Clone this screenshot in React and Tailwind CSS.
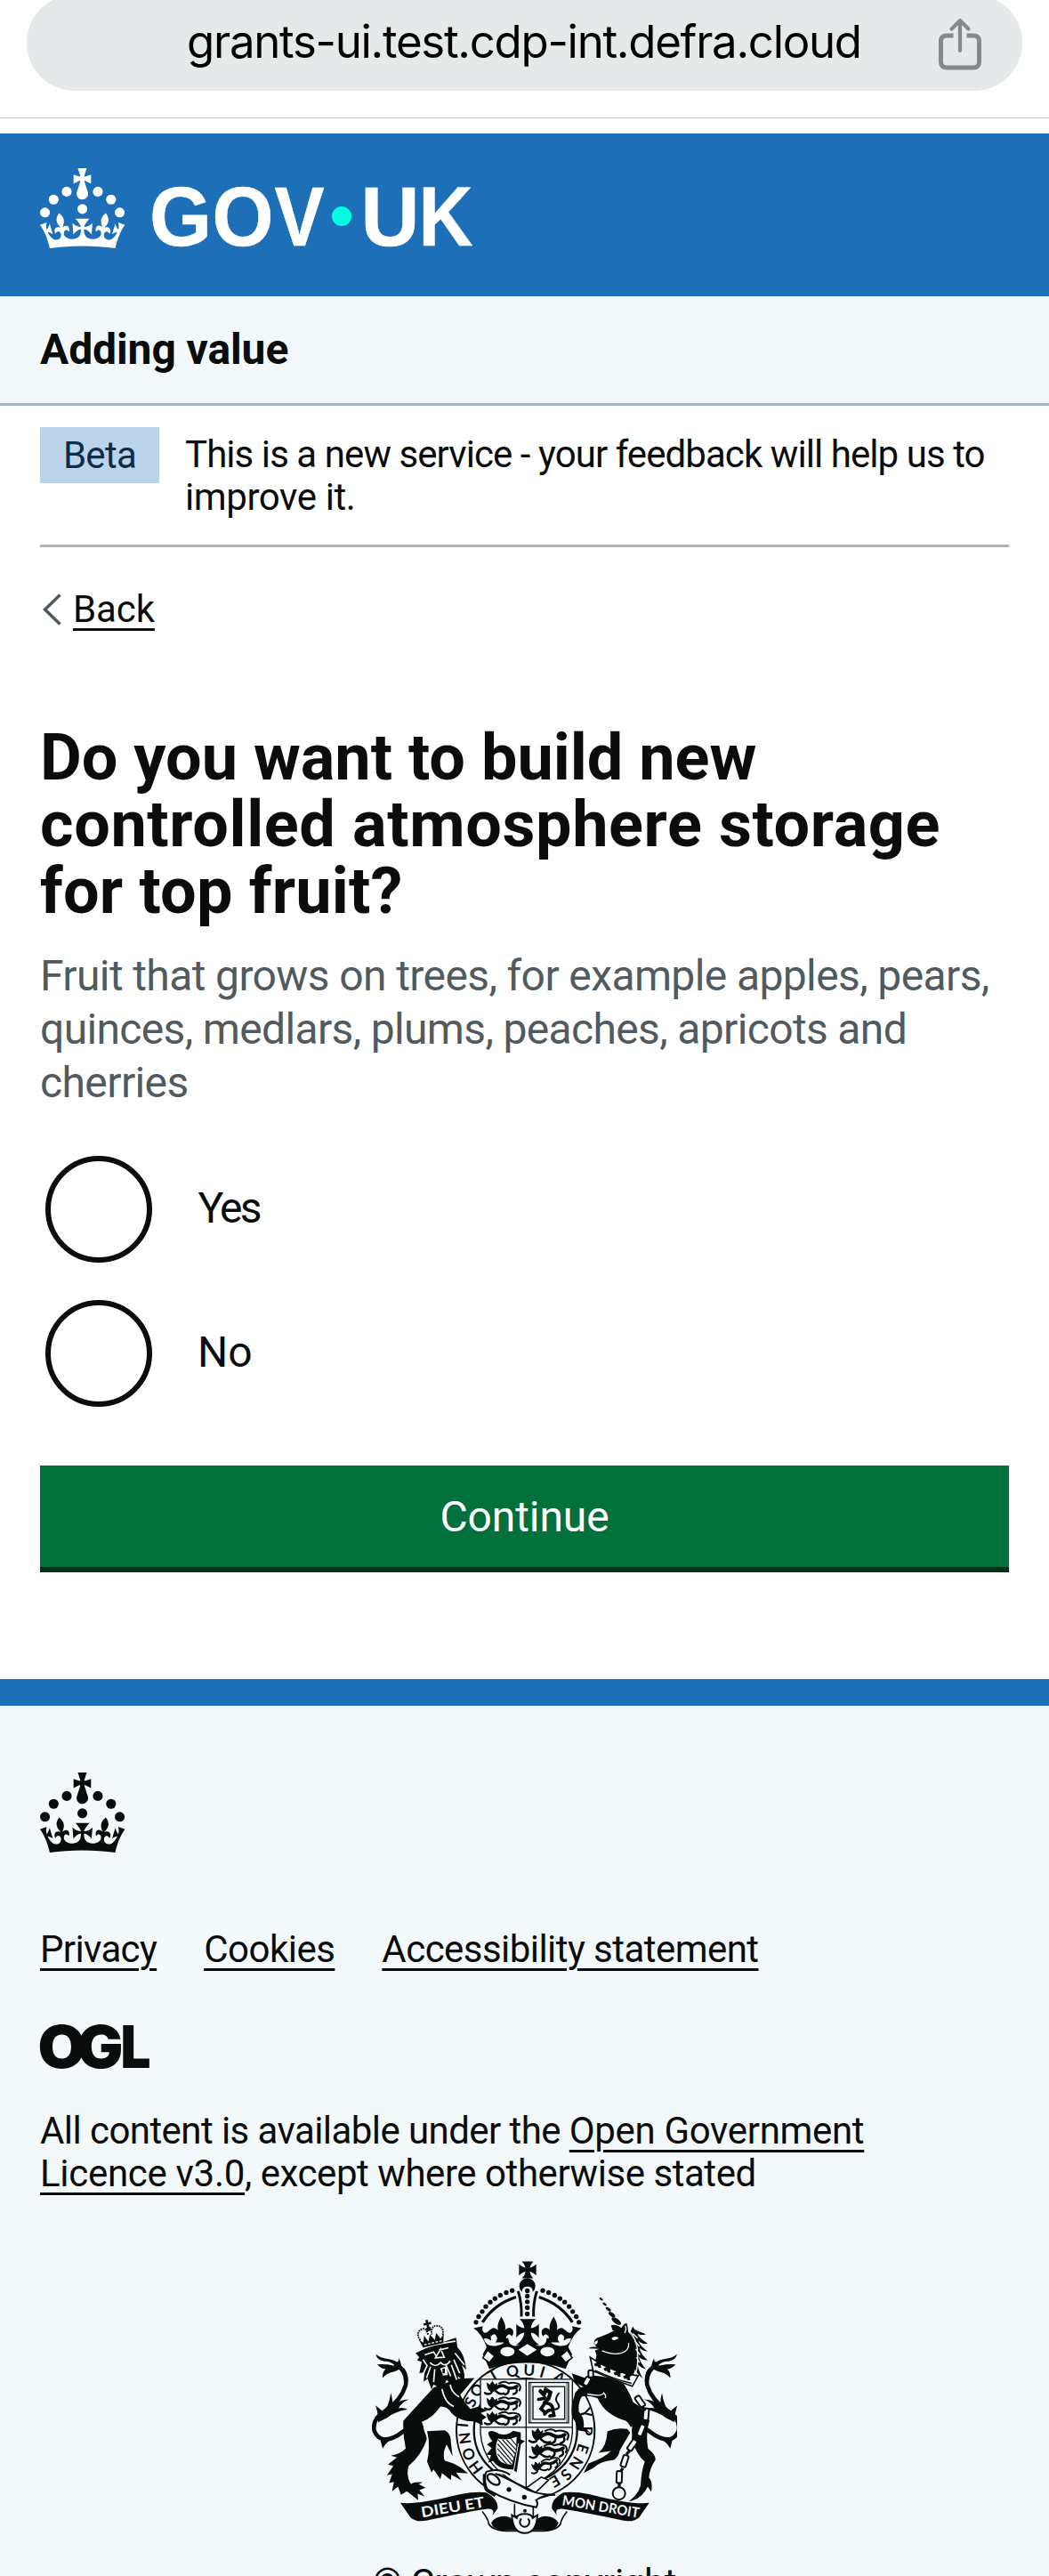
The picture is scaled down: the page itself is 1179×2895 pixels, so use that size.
import React from "react";

const INK = "#0b0c0c";
const PAPER = "#f3f9fb";

function Crown() {
  return (
    <g>
      <circle cx="20" cy="17.6" r="3.7" />
      <circle cx="10.2" cy="23.5" r="3.7" />
      <circle cx="3.7" cy="33.2" r="3.7" />
      <circle cx="31.7" cy="30.6" r="3.7" />
      <circle cx="43.3" cy="17.6" r="3.7" />
      <circle cx="53.2" cy="23.5" r="3.7" />
      <circle cx="59.7" cy="33.2" r="3.7" />
      <path d="M33.1,9.8c.2-.1.3-.3.5-.5l4.6,2.4v-6.8l-4.6,1.5c-.1-.2-.3-.3-.5-.5l1.9-5.9h-6.7l1.9,5.9c-.2.1-.3.3-.5.5l-4.6-1.5v6.8l4.6-2.4c.1.2.3.3.5.5l-2.6,8c-.9,2.8,1.2,5.7,4.1,5.7h0c3,0,5.1-2.9,4.1-5.7l-2.6-8ZM37,37.9s-3.4,3.8-4.1,6.1c2.2,0,4.2-.5,6.4-2.8l-.7,8.5c-2-2.8-4.4-4.1-5.7-3.8.1,3.1.5,6.7,5.8,7.2,3.7.3,6.7-1.5,7-3.8.4-2.6-2-4.3-3.7-1.6-1.4-4.5,2.4-6.1,4.9-3.2-1.9-4.5-1.8-7.7,2.4-10.9,3,4,2.6,7.3-1.2,11.1,2.4-1.3,6.2,0,4,4.6-1.2-2.8-3.7-2.2-4.2.2-.3,1.7.7,3.7,3,4.2,1.9.3,4.7-.9,7-5.9-1.3,0-2.4.7-3.9,1.7l2.4-8c.6,2.3,1.4,3.7,2.2,4.5.6-1.6.5-2.8,0-5.3l5,1.8c-2.6,3.6-5.2,8.7-7.3,17.5-7.4-1.1-15.7-1.7-24.5-1.7h0c-8.8,0-17.1.6-24.5,1.7-2.1-8.9-4.7-13.9-7.3-17.5l5-1.8c-.5,2.5-.6,3.7,0,5.3.8-.8,1.6-2.3,2.2-4.5l2.4,8c-1.5-1-2.6-1.7-3.9-1.7,2.3,5,5.2,6.2,7,5.9,2.3-.4,3.3-2.4,3-4.2-.5-2.4-3-3.1-4.2-.2-2.2-4.6,1.6-6,4-4.6-3.7-3.7-4.2-7.1-1.2-11.1,4.2,3.2,4.3,6.4,2.4,10.9,2.5-2.8,6.3-1.3,4.9,3.2-1.8-2.7-4.1-1-3.7,1.6.3,2.3,3.3,4.1,7,3.8,5.4-.5,5.7-4.2,5.8-7.2-1.3-.2-3.7,1-5.7,3.8l-.7-8.5c2.2,2.3,4.2,2.7,6.4,2.8-.7-2.3-4.1-6.1-4.1-6.1h10.6,0Z" />
    </g>
  );
}

function GovUkLogo() {
  return (
    <svg width="486" height="90" viewBox="0 0 486 90" fill="#ffffff" className="block overflow-visible" aria-label="GOV.UK">
      <g transform="scale(1.5)"><Crown /></g>
      <g fontFamily="'Liberation Sans', Arial, sans-serif" fontWeight="700" fontSize="95" stroke="#ffffff" strokeWidth="0.6">
        <text x="123" y="87" textLength="70" lengthAdjust="spacingAndGlyphs">G</text>
        <text x="193.5" y="87" textLength="69" lengthAdjust="spacingAndGlyphs">O</text>
        <text x="263.5" y="87" textLength="56" lengthAdjust="spacingAndGlyphs">V</text>
        <text x="360.5" y="87" textLength="66" lengthAdjust="spacingAndGlyphs">U</text>
        <text x="425.5" y="87" textLength="61" lengthAdjust="spacingAndGlyphs">K</text>
      </g>
      <circle cx="339" cy="54" r="11" fill="#00ffe0" />
    </svg>
  );
}

function OglLogo() {
  return (
    <svg width="123" height="50" viewBox="0 0 123 50" fill={INK} className="block overflow-visible" aria-label="OGL">
      <g fontFamily="Inter, sans-serif" fontWeight="900" fontSize="66.5">
        <text x="-2.5" y="49.500" textLength="54" lengthAdjust="spacingAndGlyphs">O</text>
        <text x="41.500" y="49.500" textLength="52" lengthAdjust="spacingAndGlyphs">G</text>
        <text x="90.500" y="49.500" textLength="34" lengthAdjust="spacingAndGlyphs">L</text>
      </g>
    </svg>
  );
}

const PEARLS = [[527, 161], [507, 168], [487, 177], [469, 188], [453, 200], [438, 215], [426, 232], [414, 249], [405, 268]];

const MOTTO = [
  ["H", 405, 757], ["O", 381, 712], ["N", 368, 659], ["I", 360, 615], ["S", 387, 537], ["O", 408, 497],
  ["T", 463, 446], ["Q", 528, 433], ["U", 584, 430], ["I", 629, 436], ["A", 686, 456],
  ["Y", 775, 574], ["P", 778, 634], ["E", 764, 694], ["N", 742, 742], ["S", 709, 781], ["E", 671, 803],
];

const LINKS = [[958, 535, -35], [978, 578, 5], [962, 632, 22], [932, 682, 35], [906, 736, 18], [888, 790, 2]];

function HeraldicLion({ x, y, s = 1, r = 0 }) {
  return (
    <g transform={`translate(${x} ${y}) rotate(${r}) scale(${s})`} fill="none" stroke={INK} strokeLinecap="round" strokeLinejoin="round">
      <path d="M0 -14 Q0 10 16 16 Q34 8 32 -14 L25 -8 L17 -20 L9 -8Z" fill={INK} strokeWidth="3" />
      <path d="M28 4 Q45 -12 62 -2 Q80 8 100 -4" strokeWidth="11" />
      <path d="M40 -14 Q58 -24 72 -14 Q88 -20 106 -12 Q116 -4 108 10" strokeWidth="6" />
      <path d="M14 18 Q4 26 -8 18 M28 12 Q42 26 56 20 M72 6 Q74 20 60 24 M98 4 Q104 18 88 22" strokeWidth="7" />
    </g>
  );
}

function Tail() {
  return (
    <g>
      <path d="M225 590 L140 650 Q82 682 62 634 Q54 592 100 566 Q152 532 168 480 Q174 430 130 408" fill="none" stroke={INK} strokeWidth="14" />
      <path d="M150 425 Q120 406 72 410 Q84 424 100 426 Q88 438 90 456 Q104 438 130 434Z M165 440 Q120 395 95 400 Q72 396 67 376 Q84 390 112 392 Q128 394 138 402 Q146 402 144 388 Q152 402 154 416 Q178 430 176 470Z" />
      <path d="M75 605 Q76 575 66 548 Q86 564 92 570 Q110 555 118 506 Q126 536 122 550 Q150 528 178 528 Q152 540 144 558 Q160 554 174 562 Q130 570 105 590Z" />
      <path d="M80 652 Q86 680 90 694 Q98 678 114 666Z" />
    </g>
  );
}

function CrownSide() {
  return (
    <g>
      {PEARLS.map(([x, y]) => <circle key={x} cx={x} cy={y} r="8" />)}
      <path d="M540 183 Q466 207 427 268" fill="none" stroke={INK} strokeWidth="10" />
      <path d="M547 163 Q560 205 558 249" fill="none" stroke={INK} strokeWidth="9" />
      <path d="M397 288 L428 281 Q423 296 434 304 Q444 304 453 292 L456 331 Q444 319 431 323 Q438 350 470 348 Q500 344 501 330 L490 322 L579 322 L579 405 Q508 404 450 425 L428 376 L441 352 Q424 306 397 288Z" />
      <path d="M490 249 Q514 285 497 306 Q506 284 522 288 Q538 296 526 316 Q518 302 508 314 Q502 326 512 336 L470 336 Q480 326 474 314 Q464 302 456 316 Q444 296 460 288 Q476 284 485 306 Q468 285 490 249Z" />
      <circle cx="538" cy="324" r="24" fill={PAPER} />
      <path d="M516 316 Q536 320 538 280 L516 290Z" fill={PAPER} />
      <path d="M522 288 Q538 296 526 316 Q518 302 508 314 L498 306 Q506 284 522 288Z" />
      <path d="M462 330 Q470 345 456 346 Q444 340 452 330Z" fill={PAPER} />
      <ellipse cx="511" cy="367" rx="24" ry="16" fill={PAPER} />
      <path d="M444 362 L468 382 L450 404 L428 388Z" fill={PAPER} stroke={INK} strokeWidth="5" />
    </g>
  );
}

function RoyalArms() {
  return (
    <svg width="343" height="307" viewBox="54 62 1029 920" fill={INK} className="block overflow-hidden" aria-label="Royal coat of arms">
      {/* Garter and shield */}
      <circle cx="572" cy="632" r="233" fill={PAPER} stroke={INK} strokeWidth="6" />
      <circle cx="572" cy="632" r="174" fill="none" stroke={INK} strokeWidth="7" />
      <g fontFamily="Lato, sans-serif" fontWeight="700" fontSize="52" textAnchor="middle">
        {MOTTO.map(([ch, x, y], i) => (
          <text key={i} transform={`translate(${x} ${y}) rotate(${(Math.atan2(x - 572, 632 - y) * 180) / Math.PI})`} y="18">{ch}</text>
        ))}
      </g>
      <path d="M420 460 H730 V640 Q722 765 575 826 Q428 765 420 640Z" fill={PAPER} stroke={INK} strokeWidth="4" />
      <path d="M574 460 V826 M420 622 H730" stroke={INK} strokeWidth="4" />
      <HeraldicLion x={443} y={488} />
      <HeraldicLion x={443} y={540} />
      <HeraldicLion x={443} y={590} />
      <HeraldicLion x={594} y={648} s={1.1} r={2} />
      <HeraldicLion x={594} y={702} s={1.05} r={-3} />
      <HeraldicLion x={596} y={760} s={0.85} r={-16} />
      <g fill="none" stroke={INK} strokeWidth="4">
        <rect x="584" y="471" width="133" height="136" />
        <rect x="597" y="485" width="107" height="110" />
        <path d="M590 471 v136 M711 471 v136" strokeWidth="2" />
      </g>
      <g fill="none" stroke={INK} strokeLinecap="round">
        <path d="M622 500 L634 512 L640 495 L656 505 L650 525 L636 540" strokeWidth="13" />
        <path d="M636 540 Q665 540 664 565 Q650 560 636 578 M664 562 L668 582 L654 584 M640 524 L616 528 M634 545 L624 560 L638 572" strokeWidth="11" />
        <path d="M668 562 Q694 560 680 540 Q668 526 684 508" strokeWidth="6" />
      </g>
      <path d="M446 640 Q454 628 482 644 Q512 652 530 634 L556 640 L556 664 L570 668 L556 680 L542 774 L528 764 Q480 765 462 735 L446 742 L456 716 L440 714 L458 692 L442 680 L460 668 Q448 656 446 640Z" />
      <path d="M480 660 Q510 668 542 654 L540 700 L526 748 Q485 750 474 715 Q468 680 480 660Z" fill={PAPER} />
      <path d="M480 664 L536 728 M478 678 L532 742 M477 694 L524 746 M478 712 L508 746 M494 664 L540 714 M508 664 L542 700 M522 660 L542 684" stroke={INK} strokeWidth="3.5" />
      <path d="M548 676 L532 768" stroke={PAPER} strokeWidth="3" />

      {/* Imperial crown */}
      <path d="M560 63 H598 Q588 75 586 85 Q597 82 608 73 V110 Q597 100 586 97 Q587 108 598 120 H560 Q571 108 572 97 Q561 100 550 110 V73 Q561 82 572 85 Q571 75 560 63Z" />
      <circle cx="578" cy="146" r="27" />
      <path d="M560 180 V164 Q562 148 578 148 Q596 148 596 164 V180Z" fill={PAPER} />
      {[162, 180, 199, 219, 240].map((y) => <circle key={y} cx="578" cy={y} r="8" />)}
      <CrownSide />
      <g transform="translate(1157 0) scale(-1 1)"><CrownSide /></g>
      <path d="M552 257 H606 Q592 270 590 288 Q605 287 617 274 V320 Q604 304 590 303 Q591 325 618 345 H540 Q567 325 568 303 Q554 304 541 320 V274 Q553 287 568 288 Q566 270 552 257Z" />
      <path d="M578 341 L610 361 L578 381 L548 361Z" fill={PAPER} />

      {/* Lion supporter */}
      <Tail />
      <path d="M262 488 L160 600 Q158 650 168 694 Q150 712 118 718 L138 724 L108 748 L126 752 L105 784 L122 780 L112 810 L128 806 L122 838 L142 822 L152 850 L172 838 L210 868 L208 846 L232 856 L214 834 L235 826 L212 814 L226 808 Q196 804 186 814 Q168 786 178 752 Q222 716 240 660 L232 630 L222 604 Q260 590 285 552 Q310 552 322 574 Q350 604 400 602 L428 616 L426 598 L440 588 L420 574 L442 566 L415 552 L386 560 Q360 530 352 512 L400 456 L345 458 L325 465Z" />
      <path d="M240 635 L300 632 Q322 646 320 670 L326 720 L306 680 Q290 712 300 735 Q345 745 378 778 L338 775 L357 802 L322 782 L320 800 L290 776 L285 797 L262 764 L255 775 L240 738 Q252 690 240 635Z" />
      <path d="M290 492 Q300 540 330 552 M318 478 Q322 505 348 520 M232 606 Q226 624 240 650 Q246 680 236 712" fill="none" stroke={PAPER} strokeWidth="5" />
      <path d="M201 372 L245 352 L338 320 L342 352 Q368 378 372 428 L356 412 Q370 442 364 466 L344 450 Q346 474 334 488 L306 462 L292 494 L262 478 L255 494 L242 458 L228 468 L232 436 L214 440 L222 402 L206 396 L214 386Z" />
      <g fill="none" stroke={PAPER} strokeWidth="5">
        <path d="M208 362 Q265 340 336 332 M232 378 L262 368 L272 384 M280 362 L312 354 M268 388 L286 358 L298 386 Z M250 404 Q268 424 286 404 Q302 422 318 398 M302 408 L320 450 M252 418 L238 456 M266 426 L262 470 M330 394 L350 440 M334 372 L366 412 M322 412 L340 462 M226 394 L240 414 L228 440" />
      </g>
      <path d="M284 424 L294 448 L310 446 L306 416Z" fill={PAPER} />
      <path d="M296 424 V440" stroke={INK} strokeWidth="8" />
      <g transform="rotate(-13 255 320)">
        <path d="M248 258 h8 v9 h9 v8 h-9 v9 h4 v12 h-16 v-12 h4 v-9 h-9 v-8 h9Z" />
        <path d="M216 320 Q204 290 232 284 Q246 284 246 310 M294 320 Q306 290 278 284 Q260 284 258 310" fill="none" stroke={INK} strokeWidth="6" strokeDasharray="5 3" />
        <path d="M212 318 L224 330 L232 308 L242 330 L252 308 L264 330 L274 308 L284 330 L298 316 L290 346 H220Z" />
        <path d="M226 338 H286" stroke={PAPER} strokeWidth="4" strokeDasharray="8 5" />
      </g>

      {/* Unicorn supporter */}
      <g transform="translate(1150 0) scale(-1 1)"><Tail /></g>
      <path d="M730 590 Q722 555 736 518 Q740 488 778 482 L802 448 Q860 450 905 478 Q925 510 935 538 Q975 560 990 600 Q976 640 985 694 Q1012 716 1010 732 Q990 762 988 792 Q1002 806 996 840 L984 822 Q962 866 920 872 Q952 848 960 818 Q962 770 974 738 Q944 712 930 660 Q936 620 910 600 Q840 580 815 524 Q785 514 762 518 Q748 540 752 570 Q772 590 768 622 L790 640 L748 632 L742 606Z" />
      <path d="M848 636 Q880 622 915 628 L925 640 L890 700 Q886 722 870 732 Q820 738 800 760 L768 776 L784 744 Q840 724 860 702 L818 708 Q845 688 848 636Z" />
      <path d="M780 510 Q830 520 836 506 Q846 516 840 524 M930 620 Q922 650 934 690 Q946 720 945 740" fill="none" stroke={PAPER} strokeWidth="4" />
      <path d="M728 440 L790 462 L775 490 L738 470Z" />
      <path d="M803 342 Q800 322 822 318 Q846 310 868 298 Q884 300 896 286 Q904 270 914 272 Q918 290 918 300 Q946 326 946 372 Q950 420 930 456 L806 398 Q816 380 806 364 L820 358 L784 356 Q790 350 812 350Z" />
      <path d="M862 322 Q872 312 886 320 Q880 330 866 328Z M804 338 Q806 328 816 330 Q816 342 806 344Z" fill={PAPER} />
      <path d="M830 364 Q880 384 908 366 Q920 358 920 338 M908 280 Q914 290 906 304" fill="none" stroke={PAPER} strokeWidth="4" />
      {[[827, 190, 7, 3.5], [839, 207, 8, 4], [851, 224, 10, 5], [863, 242, 13, 6.5], [878, 264, 19, 8]].map(([x, y, rx, ry]) => (
        <ellipse key={x} cx={x} cy={y} rx={rx} ry={ry} transform={`rotate(36 ${x} ${y})`} />
      ))}
      <path d="M860 278 Q880 272 902 292 Q880 302 866 296Z M934 282 Q938 294 948 296 L978 308 Q960 314 950 306 Q950 318 984 340 Q966 344 952 330 Q958 348 984 366 Q968 366 956 354 Q960 376 984 396 Q964 396 954 384 Q958 404 978 426 Q962 422 950 410 Q954 436 968 458 Q944 440 940 420 L946 380 Q946 330 924 302Z" />
      <path d="M922 296 Q950 330 950 372 Q952 410 944 440 M950 322 L934 306 M956 350 L940 330 M958 378 L944 358 M956 404 L946 386" fill="none" stroke={PAPER} strokeWidth="4" />
      <path d="M790 386 Q868 440 952 448 L932 484 Q870 462 800 432Z" fill={PAPER} stroke={INK} strokeWidth="5" />
      {[[818, 408], [850, 424], [884, 438], [916, 450]].map(([x, y]) => (
        <path key={x} d="M-12 -8 L0 -18 L12 -8 Q4 0 14 8 Q4 16 0 8 Q-6 16 -14 6 Q-4 0 -12 -8Z" transform={`translate(${x} ${y}) rotate(24)`} />
      ))}
      <path d="M806 430 Q870 460 930 474" fill="none" stroke={INK} strokeWidth="4" />
      <g fill={PAPER} stroke={INK} strokeWidth="6">
        <rect x="770" y="452" width="18" height="30" rx="6" transform="rotate(30 779 467)" />
        <rect x="784" y="430" width="16" height="24" rx="5" />
        {LINKS.map(([x, y, r]) => (
          <rect key={y} x={x - 9} y={y - 20} width="18" height="40" rx="5" transform={`rotate(${r} ${x} ${y})`} />
        ))}
      </g>
      <path d="M964 552 L976 566 M976 596 L968 612 M952 652 L944 664 M922 702 L912 714 M900 760 L892 772 M888 808 V824" stroke={INK} strokeWidth="10" />
      <circle cx="887" cy="845" r="21" fill="none" stroke={INK} strokeWidth="6" />

      {/* Ribbon */}
      <g>
        <path d="M150 877 Q210 884 350 848 Q400 838 440 842 Q482 866 478 896 L460 920 Q472 896 444 897 Q390 904 240 936 Q204 944 184 926Z" />
        <path d="M989 877 Q929 884 789 848 Q739 838 699 842 Q657 866 661 896 L679 920 Q667 896 695 897 Q749 904 899 936 Q935 944 955 926Z" />
        <path d="M426 906 Q446 930 448 948 Q462 972 520 972 H620 Q676 972 690 948 Q692 930 712 906" fill="none" stroke={INK} strokeWidth="5" />
        <path d="M456 944 Q470 922 502 922 Q540 926 544 970 H500 Q462 968 456 944Z M683 944 Q669 922 637 922 Q599 926 595 970 H639 Q677 968 683 944Z" />
      </g>
      <g fontFamily="Lato, sans-serif" fontWeight="700" fill={PAPER}>
        <text transform="translate(223 926) rotate(-9.5)" fontSize="49" textLength="216" lengthAdjust="spacingAndGlyphs">DIEU ET</text>
        <text transform="translate(694 884) rotate(9.5)" fontSize="47" textLength="262" lengthAdjust="spacingAndGlyphs">MON DROIT</text>
      </g>

      {/* Belt and buckle */}
      <path d="M575 826 L625 790 L650 800 L606 842Z" fill={PAPER} stroke={INK} strokeWidth="5" />
      <path d="M535 880 V922 H598 V880" fill={PAPER} stroke={INK} strokeWidth="5" />
      <path d="M526 918 Q528 978 569 979 Q610 978 612 918 L596 928 Q594 914 569 914 Q544 914 542 928Z" fill={PAPER} stroke={INK} strokeWidth="6" />
      <path d="M558 930 A16 16 0 1 0 580 930" fill="none" stroke={INK} strokeWidth="6" />
      <circle cx="570" cy="904" r="6" />
      <path d="M520 782 Q480 758 440 772 Q424 800 444 832 Q520 876 608 892 Q616 880 608 868 Q630 850 672 850 Q600 850 560 822 Q510 794 470 778" fill={PAPER} stroke={INK} strokeWidth="6" />
      <path d="M434 780 Q430 830 448 838 L470 852" fill="none" stroke={INK} strokeWidth="11" />
      <ellipse cx="464" cy="798" rx="24" ry="14" transform="rotate(38 464 798)" fill={PAPER} stroke={INK} strokeWidth="7" />
      <circle cx="516" cy="832" r="8" />
      <circle cx="568" cy="858" r="8" />
    </svg>
  );
}

function Link({ children, className = "" }) {
  return <a className={"underline decoration-[3px] underline-offset-[7px] " + className}>{children}</a>;
}

function Radio({ label, className }) {
  return (
    <label className="flex h-[132px] items-center pl-[6px]">
      <span className="size-[120px] rounded-full border-[6px] border-[#0b0c0c] bg-white" />
      <span className={"-mt-[2px] text-[48px] leading-[60px] " + className}>{label}</span>
    </label>
  );
}

export default function App() {
  return (
    <div className="flex h-[2895px] w-[1179px] flex-col overflow-hidden bg-white font-['Roboto',sans-serif] text-[#0b0c0c]">
      <div className="h-[133px] shrink-0 border-b border-[#c4c6c8] px-[30px]">
        <div className="-mt-[6px] flex h-[108px] items-center rounded-full bg-[#e5e9ea] pl-[180px] pr-[46px]">
          <span className="-mt-[2px] flex-1 whitespace-nowrap font-['Inter',sans-serif] text-[51px] leading-[60px] tracking-[-1.3px] text-black">
            grants-ui.test.cdp-int.defra.cloud
          </span>
          <svg width="48" height="60" viewBox="0 0 48 60" fill="none" stroke="#83898d" strokeWidth="5" strokeLinecap="butt" className="mt-[3px] block">
            <path d="M16.500 20 H9 Q2.500 20 2.500 26.500 V49.500 Q2.500 56 9 56 H39 Q45.500 56 45.500 49.500 V26.500 Q45.500 20 39 20 H31.500" />
            <path d="M24 37 V4 M14.500 12.500 L24 3 L33.500 12.500" strokeWidth="4.200" strokeLinecap="round" strokeLinejoin="round" />
          </svg>
        </div>
      </div>

      <header className="mt-[17px] h-[183px] shrink-0 bg-[#1d70b8] px-[45px] pt-[39px]">
        <GovUkLogo />
      </header>

      <div className="flex h-[123px] shrink-0 items-center border-b-[3px] border-[#8eb8dc] bg-[#f3f9fb] px-[45px]">
        <span className="-mt-[1px] text-[48px] font-bold leading-[60px] tracking-[-0.1px]">Adding value</span>
      </div>

      <main className="shrink-0 px-[45px]">
        <div className="flex h-[159px] items-start border-b-[3px] border-[#b1b4b6] pt-[24px]">
          <strong className="flex h-[63px] w-[134px] shrink-0 items-center justify-center bg-[#bbd4ea] text-[42px] font-normal leading-[48px] tracking-[-0.7px] text-[#0c2d4a]">
            Beta
          </strong>
          <p className="ml-[29px] mt-[7px] whitespace-nowrap text-[42px] leading-[48px]">
            <span className="tracking-[-0.93px]">This is a new service - your feedback will help us to</span>
            <br />
            <span className="tracking-[-0.4px]">improve it.</span>
          </p>
        </div>

        <div className="mt-[46px] flex h-[48px] items-center">
          <svg width="37" height="36" viewBox="0 0 37 36" fill="none" stroke="#505a5f" strokeWidth="3.500" className="block">
            <path d="M22.500 1.500 L5.500 18 L22.500 34.500" />
          </svg>
          <Link className="text-[42px] leading-[48px] tracking-[-0.1px]">Back</Link>
        </div>

        <h1 className="mt-[105px] whitespace-nowrap text-[72px] font-bold leading-[75px]">
          <span className="tracking-[0px]">Do you want to build new</span>
          <br />
          <span className="tracking-[0.62px]">controlled atmosphere storage</span>
          <br />
          <span className="tracking-[0.2px]">for top fruit?</span>
        </h1>
        <p className="mt-[28px] whitespace-nowrap text-[48px] leading-[60px] text-[#505a5f]">
          <span className="tracking-[-0.61px]">Fruit that grows on trees, for example apples, pears,</span>
          <br />
          <span className="tracking-[-0.65px]">quinces, medlars, plums, peaches, apricots and</span>
          <br />
          <span className="tracking-[-0.6px]">cherries</span>
        </p>

        <div className="mt-[46px] flex flex-col gap-[30px]">
          <Radio label="Yes" className="ml-[51.500px] tracking-[-2.700px]" />
          <Radio label="No" className="ml-[51px] tracking-[0px]" />
        </div>

        <button className="mt-[60px] flex h-[120px] w-full items-center justify-center border-b-[6px] border-[#002d18] bg-[#00703c] pt-[1px] text-[48px] leading-[60px] tracking-[-0.1px] text-white">
          Continue
        </button>
      </main>

      <footer className="mt-[120px] flex-1 border-t-[30px] border-[#1d70b8] bg-[#f3f9fb] px-[45px] pt-[75px]">
        <svg width="96" height="90" viewBox="0 0 64 60" fill={INK} className="block"><Crown /></svg>
        <nav className="mt-[85px] flex gap-[53px] whitespace-nowrap text-[42px] leading-[48px]">
          <Link className="tracking-[-0.65px]">Privacy</Link>
          <Link className="tracking-[-0.5px]">Cookies</Link>
          <Link className="tracking-[-0.55px]">Accessibility statement</Link>
        </nav>
        <div className="mt-[59px]"><OglLogo /></div>
        <p className="mt-[47px] whitespace-nowrap text-[42px] leading-[48px]">
          <span className="tracking-[-0.57px]">All content is available under the </span>
          <Link className="tracking-[-0.33px]">Open Government</Link>
          <br />
          <Link className="tracking-[-0.3px]">Licence v3.0</Link>
          <span className="tracking-[-0.45px]">, except where otherwise stated</span>
        </p>
        <div className="mt-[74px] flex justify-center"><RoyalArms /></div>
        <p className="mt-[31px] text-center text-[42px] leading-[48px] tracking-[-0.4px]">© Crown copyright</p>
      </footer>
    </div>
  );
}
